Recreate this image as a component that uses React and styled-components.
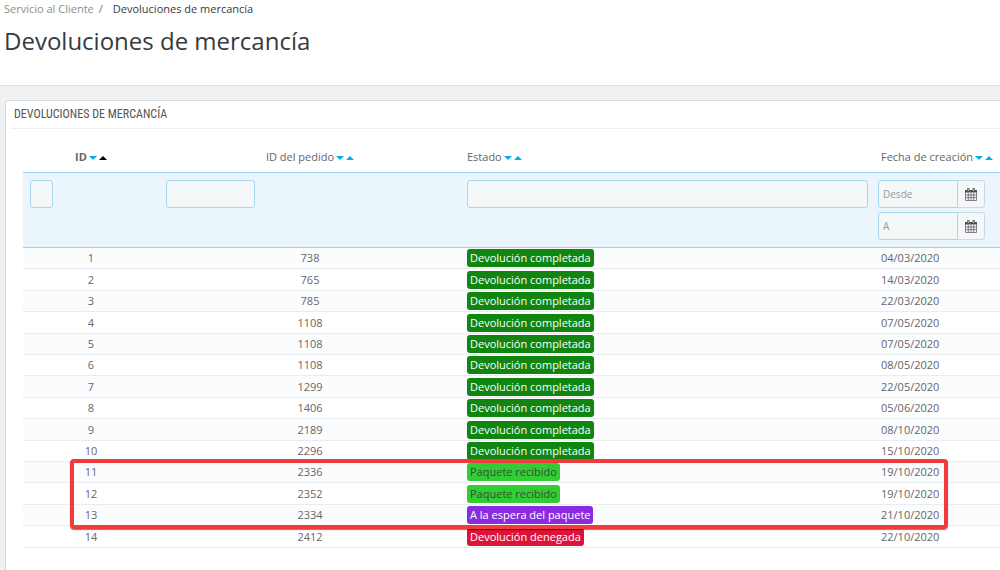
import React, { useState } from "react";
import styled, { createGlobalStyle, css } from "styled-components";

const returns = [
    { id: 1, order: 738, status: "completed", date: "04/03/2020" },
    { id: 2, order: 765, status: "completed", date: "14/03/2020" },
    { id: 3, order: 785, status: "completed", date: "22/03/2020" },
    { id: 4, order: 1108, status: "completed", date: "07/05/2020" },
    { id: 5, order: 1108, status: "completed", date: "07/05/2020" },
    { id: 6, order: 1108, status: "completed", date: "08/05/2020" },
    { id: 7, order: 1299, status: "completed", date: "22/05/2020" },
    { id: 8, order: 1406, status: "completed", date: "05/06/2020" },
    { id: 9, order: 2189, status: "completed", date: "08/10/2020" },
    { id: 10, order: 2296, status: "completed", date: "15/10/2020" },
    { id: 11, order: 2336, status: "received", date: "19/10/2020" },
    { id: 12, order: 2352, status: "received", date: "19/10/2020" },
    { id: 13, order: 2334, status: "waiting", date: "21/10/2020" },
    { id: 14, order: 2412, status: "denied", date: "22/10/2020" },
];

const statuses = {
    completed: { label: "Devolución completada", background: "#108510", color: "#fff" },
    received: { label: "Paquete recibido", background: "#32cd32", color: "#35513a" },
    waiting: { label: "A la espera del paquete", background: "#8a2be2", color: "#fff" },
    denied: { label: "Devolución denegada", background: "#dc143c", color: "#fff" },
};

function SortButtons({ label, active }) {
    return (
        <Sort>
            <SortButton type="button" aria-label={`${label} descendente`}>
                <svg width="8" height="4" viewBox="0 0 8 4"><path d="M0 0h8L4 4z" fill="currentColor" /></svg>
            </SortButton>
            <SortButton type="button" aria-label={`${label} ascendente`} $active={active}>
                <svg width="8" height="4" viewBox="0 0 8 4"><path d="M0 4h8L4 0z" fill="currentColor" /></svg>
            </SortButton>
        </Sort>
    );
}

function CalendarIcon() {
    return (
        <svg width="12" height="13" viewBox="0 0 12 13" fill="none" stroke="currentColor">
            <path d="M0 2h12v2.5H0z" fill="currentColor" stroke="none" />
            <path d="M.5 2.5h11v10H.5zM3.3 5v7M6 5v7M8.7 5v7M1 7h10M1 9.7h10" strokeWidth="0.7" />
            <path d="M3.3 0v3.4M8.7 0v3.4" strokeWidth="2.2" />
            <path d="M3.3 .9v2M8.7 .9v2" stroke="#f4f8f9" strokeWidth="0.7" />
        </svg>
    );
}

function DateField({ placeholder }) {
    const [value, setValue] = useState("");

    return (
        <DateGroup>
            <DateInput
                aria-label={`Fecha de creación: ${placeholder}`}
                placeholder={placeholder}
                value={value}
                onChange={(e) => setValue(e.target.value)}
            />
            <CalendarButton type="button" aria-label={`Abrir calendario: ${placeholder}`}>
                <CalendarIcon />
            </CalendarButton>
        </DateGroup>
    );
}

function ReturnRow({ item }) {
    const status = statuses[item.status];

    return (
        <Row $odd={item.id % 2 === 1} $tall={item.id % 5 === 2 || item.id % 5 === 4}>
            <Cell $center>{item.id}</Cell>
            <Cell $center>{item.order}</Cell>
            <Cell>
                <Badge $background={status.background} $color={status.color}>{status.label}</Badge>
            </Cell>
            <Cell $date>{item.date}</Cell>
        </Row>
    );
}

export default function App() {
    return (
        <>
            <GlobalStyle />
            <PageHead>
                <Breadcrumb aria-label="Ruta">
                    <CrumbLink href="#">Servicio al Cliente</CrumbLink>
                    <Separator>/</Separator>
                    <span>Devoluciones de mercancía</span>
                </Breadcrumb>
                <Title>Devoluciones de mercancía</Title>
            </PageHead>
            <Content>
                <Panel>
                    <PanelHeading>DEVOLUCIONES DE MERCANCÍA</PanelHeading>
                    <Table>
                        <colgroup>
                            <Col $width="136px" />
                            <Col $width="302px" />
                            <Col />
                            <Col $width="128px" />
                        </colgroup>
                        <thead>
                            <tr>
                                <HeadCell $center $bold>ID<SortButtons label="ID" active /></HeadCell>
                                <HeadCell $center>ID del pedido<SortButtons label="ID del pedido" /></HeadCell>
                                <HeadCell>Estado<SortButtons label="Estado" /></HeadCell>
                                <HeadCell $date>Fecha de creación<SortButtons label="Fecha de creación" /></HeadCell>
                            </tr>
                            <FilterRow>
                                <FilterCell><FilterInput $width="23px" aria-label="Filtrar por ID" /></FilterCell>
                                <FilterCell><FilterInput $width="89px" aria-label="Filtrar por ID del pedido" /></FilterCell>
                                <FilterCell $wide><FilterInput $width="100%" aria-label="Filtrar por estado" /></FilterCell>
                                <FilterCell $wide>
                                    <Dates>
                                        <DateField placeholder="Desde" />
                                        <DateField placeholder="A" />
                                    </Dates>
                                </FilterCell>
                            </FilterRow>
                        </thead>
                        <tbody>
                            {returns.slice(0, 10).map((item) => <ReturnRow item={item} key={item.id} />)}
                        </tbody>
                        <Highlighted>
                            {returns.slice(10, 13).map((item) => <ReturnRow item={item} key={item.id} />)}
                        </Highlighted>
                        <tbody>
                            {returns.slice(13).map((item) => <ReturnRow item={item} key={item.id} />)}
                        </tbody>
                    </Table>
                </Panel>
            </Content>
        </>
    );
}

const GlobalStyle = createGlobalStyle`
    *, *::before, *::after {
        box-sizing: border-box;
    }

    body {
        margin: 0;
        background: #eff1f2;
        color: #666;
        font-family: "Open Sans", "Noto Sans", sans-serif;
        font-size: 11px;
        line-height: 16px;
        overflow-x: hidden;
    }

    #root {
        display: flex;
        flex-direction: column;
        min-height: 100vh;
    }

    button, input {
        font: inherit;
    }
`;

const PageHead = styled.header`
    height: 86px;
    padding: 0 4px;
    background: #fff;
    border-bottom: 1px solid #dfe1e3;
`;

const Breadcrumb = styled.nav`
    display: flex;
    padding-top: 1px;
    color: #363a41;
`;

const CrumbLink = styled.a`
    color: #8d8d8d;
    text-decoration: none;
`;

const Separator = styled.span`
    padding: 0 10px 0 5px;
    color: #777;
`;

const Title = styled.h1`
    margin: 8px 0 0;
    color: #363a41;
    font-size: 24px;
    font-weight: 400;
    line-height: 32px;
`;

const Content = styled.main`
    display: flex;
    flex: 1;
    padding: 14px 0 0 5px;
`;

const Panel = styled.section`
    flex: 1;
    padding-left: 4px;
    background: #fff;
    border: 1px solid #d8dbde;
    border-width: 1px 0 0 1px;
    border-radius: 4px 0 0 0;
`;

const PanelHeading = styled.h2`
    margin: 0;
    padding: 0 4px;
    border-bottom: 1px solid #eee;
    color: #555;
    font-family: "Ubuntu Condensed", "Roboto Condensed", "Open Sans", sans-serif;
    font-size: 12px;
    font-weight: 400;
    line-height: 27px;
`;

const Table = styled.table`
    width: calc(100% - 13px);
    margin-left: 13px;
    table-layout: fixed;
    border-collapse: separate;
    border-spacing: 0;
`;

const Col = styled.col`
    width: ${(props) => props.$width || "auto"};
`;

const HeadCell = styled.th`
    height: 43px;
    padding: 20px 0 6px ${(props) => (props.$center ? "0" : props.$date ? "9px" : "6px")};
    font-weight: ${(props) => (props.$bold ? 700 : 400)};
    text-align: ${(props) => (props.$center ? "center" : "left")};
    vertical-align: top;
    white-space: nowrap;
`;

const Sort = styled.span`
    display: inline-flex;
    gap: 2px;
    margin-left: 2px;
    vertical-align: middle;
`;

const SortButton = styled.button`
    display: flex;
    padding: 0;
    border: 0;
    background: none;
    color: ${(props) => (props.$active ? "#000" : "#00aff0")};
    cursor: pointer;
`;

const FilterRow = styled.tr`
    background: #ebf5fc;
`;

const FilterCell = styled.td`
    height: 76px;
    padding: ${(props) => (props.$wide ? "7px 4px 7px 6px" : "7px")};
    border-top: 1px solid #a0d0eb;
    border-bottom: 1px solid #a0d0eb;
    vertical-align: top;
`;

const field = css`
    height: 28px;
    padding: 0 4px;
    border: 1px solid #a8d6f0;
    background: #f4f8f9;
    color: #555;
    font-size: 10px;
    outline: none;

    &::placeholder {
        color: #999;
        opacity: 1;
    }
`;

const FilterInput = styled.input`
    ${field}
    display: block;
    width: ${(props) => props.$width};
    border-radius: 3px;
`;

const Dates = styled.div`
    display: flex;
    flex-direction: column;
    gap: 4px;
    width: 107px;
`;

const DateGroup = styled.div`
    display: flex;
`;

const DateInput = styled.input`
    ${field}
    flex: 1;
    min-width: 0;
    border-radius: 3px 0 0 3px;
`;

const CalendarButton = styled.button`
    display: flex;
    align-items: center;
    justify-content: center;
    width: 27px;
    padding: 0;
    border: 1px solid #c5dbe6;
    border-left: 0;
    border-radius: 0 3px 3px 0;
    background: #f4f8f9;
    color: #554d55;
    cursor: pointer;
`;

const Row = styled.tr`
    height: ${(props) => (props.$tall ? "22px" : "21px")};
    background: ${(props) => (props.$odd ? "#fbfcfe" : "#fff")};
`;

const Cell = styled.td`
    padding: 0 0 0 ${(props) => (props.$center ? "0" : props.$date ? "9px" : "6px")};
    border-bottom: 1px solid #eaedef;
    text-align: ${(props) => (props.$center ? "center" : "left")};
    vertical-align: middle;
`;

const Badge = styled.span`
    display: block;
    width: fit-content;
    padding: 0 3px;
    border-radius: 3px;
    background: ${(props) => props.$background};
    color: ${(props) => props.$color};
    font-weight: 500;
    line-height: 18px;
`;

/* red frame drawn over the rows of the group */
const Highlighted = styled.tbody`
    position: relative;

    &::after {
        content: "";
        position: absolute;
        top: -3px;
        right: 52px;
        bottom: -3px;
        left: 47px;
        border: 4px solid #ef3b3b;
        border-radius: 4px;
        box-shadow: 0 1px 1px rgba(0, 0, 0, 0.5);
        pointer-events: none;
    }
`;
